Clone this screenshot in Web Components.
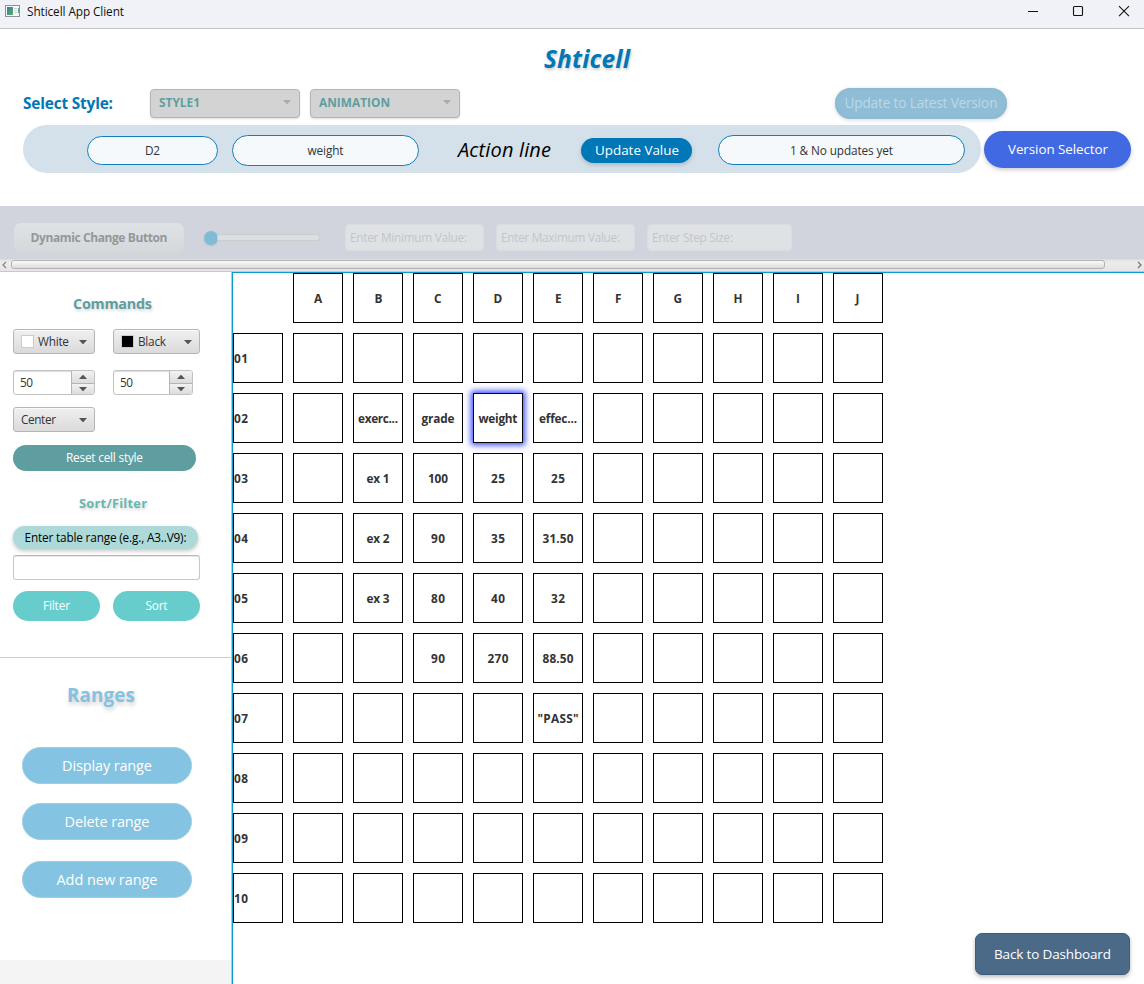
<!DOCTYPE html>
<html lang="en">
<head>
<meta charset="utf-8">
<title>Shticell App Client</title>
<style>
html,body{margin:0;height:100%;overflow:hidden;background:#fff}
body{font-family:"Open Sans","Noto Sans",sans-serif;font-size:11.8px;color:#333}
</style>
</head>
<body>
<shti-app></shti-app>
<script>
const define = (name, html, ready) => {
  const tpl = document.createElement('template');
  tpl.innerHTML = html;
  customElements.define(name, class extends HTMLElement {
    connectedCallback() {
      if (this.shadowRoot) return;
      this.attachShadow({mode: 'open'}).appendChild(tpl.content.cloneNode(true));
      if (ready) ready(this, this.shadowRoot);
    }
  });
};

/* A label whose tracking is tuned so that it takes exactly w pixels. */
define('fit-text', `<style>
:host{display:block;white-space:nowrap;line-height:var(--lh,18px);height:20px;flex:none;text-align:left}
span{display:inline-block}
</style><span><slot></slot></span>`, (el, root) => {
  const w = +el.getAttribute('w');
  if (!w) return;
  const s = root.querySelector('span');
  const n = el.textContent.length;
  el.style.width = w + 'px';
  s.style.letterSpacing = ((w - s.getBoundingClientRect().width) / Math.max(1, n - 1)) + 'px';
});

define('fx-button', `<style>
:host{display:flex;box-sizing:border-box;align-items:center;justify-content:center;flex:none;color:#fff}
</style><slot></slot>`);

define('fx-arrow', `<style>
:host{display:block;flex:none;width:8px;height:4px;color:#555}
:host([up]){transform:rotate(180deg)}
svg{display:block}
</style><svg width="8" height="4" viewBox="0 0 8 4"><path d="M0 0h8L4.4 4h-.8z" fill="currentColor"/></svg>`);

define('fx-combo', `<style>
:host{display:flex;box-sizing:border-box;align-items:center;justify-content:space-between;height:25px;flex:none;padding:0 7px 0 7px;
border:1px solid #b6b6b6;border-radius:3px;background:linear-gradient(#f0f0f0,#dadada);box-shadow:inset 0 1px #fafafa}
div{display:flex;align-items:center;gap:4px}
</style><div><slot></slot></div><fx-arrow></fx-arrow>`);

define('fx-spinner', `<style>
:host{display:flex;box-sizing:border-box;height:25px;flex:none;border:1px solid #c2c2c2;border-radius:3px;background:#fff;box-shadow:inset 0 1px 1px #ddd;overflow:hidden}
.v{flex:1;padding:2px 0 0 6px}
.b{width:22px;display:grid;grid-template-rows:12px 11px;border-left:1px solid #b5b5b5}
.b div{display:flex;align-items:center;justify-content:center;background:linear-gradient(#f2f2f2,#dcdcdc)}
.b div:first-child{padding-bottom:1px;box-sizing:border-box}
.b div+div{border-top:1px solid #b5b5b5;box-sizing:border-box}
</style><div class="v"><fit-text w="13">50</fit-text></div><div class="b"><div><fx-arrow up></fx-arrow></div><div><fx-arrow></fx-arrow></div></div>`);

define('title-bar', `<style>
:host{display:flex;box-sizing:border-box;height:29px;background:#f1f2f7;border-bottom:1px solid #c4c4c6;align-items:flex-start;color:#111;flex:none}
.i{margin:5px 0 0 5px}
fit-text{margin:2px 0 0 7px}
.w{margin:4px 13px 0 auto}
svg{display:block}
</style>
<svg class="i" width="15" height="12" viewBox="0 0 15 12"><defs><linearGradient id="g" x2="1" y2="1"><stop stop-color="#3a76ae"/><stop offset="1" stop-color="#58b368"/></linearGradient></defs><rect x=".5" y=".5" width="14" height="11" fill="#fafafa" stroke="#8d9296"/><rect x="2" y="2" width="6" height="8" fill="url(#g)"/><path d="M9 3.5h3M9 5.5h3M9 7.5h3" stroke="#cfd2d4"/><path d="M13.5 3v5" stroke="#5ba888"/></svg>
<fit-text w="97">Shticell App Client</fit-text>
<svg class="w" width="104" height="16" viewBox="0 0 104 16" fill="none" stroke="#111"><path d="M1 7.5h10"/><rect x="46.5" y="2.5" width="9" height="9" rx="1" stroke-width="1.1"/><path d="M92 2.2l10 10M102 2.2l-10 10" stroke-width="1.1"/></svg>`);

define('sheet-header', `<style>
:host{display:flex;flex-direction:column;height:177px;flex:none;background:#fff}
h1{margin:17px 0 0 544px;height:26px;font:italic bold 24.5px/26px "Open Sans","Noto Sans",sans-serif;color:#0077b6;text-shadow:1px 2px 3px rgba(0,0,0,.2)}
h1 fit-text{--lh:26px;height:26px}
.row{display:flex;align-items:center;height:32px;margin:15px 0 0 23px}
.sel{--lh:22px;color:#0077b6;font-size:15.4px;font-weight:bold;margin:0 37px 0 0}
fx-combo{--lh:20px;width:150px;height:29px;margin:0 10px 0 0;background:#d3d3d3;border-color:#b5b5b5;border-radius:4px;box-shadow:0 1px 2px #ddd;color:#5f9ea0;font-weight:bold;padding:0 8px 2px}
.latest{--lh:20px;margin:0 0 0 365px;width:172px;height:31px;border-radius:16px;background:#8fbdd6;color:#b9d9e8;font-size:13.6px;box-shadow:0 1px 4px #d8d8d8, inset 0 0 4px #86b9cd}
.line{display:flex;align-items:center;margin:6px 0 0 23px;gap:3px}
.bar{display:flex;box-sizing:border-box;width:958px;height:48px;border-radius:24px;background:#d4e0ea;align-items:center;padding:2px 0 0 64px}
.f{display:flex;box-sizing:border-box;align-items:center;justify-content:center;background:#f5f9fc;border:1px solid #1280bb;border-radius:16px;height:30px;color:#333;padding-top:1px}
.a{--lh:20px;color:#000;font-size:20px;font-style:italic;margin:0 30px 0 39px}
.u{--lh:20px;width:111px;height:25px;border-radius:13px;background:#0077b6;font-size:13.4px;box-shadow:0 2px 4px #aeb9c2;margin:0 26px 0 0;padding-left:1px}
.v{--lh:20px;width:147px;height:37px;border-radius:19px;background:#4169e1;font-size:13.4px;box-shadow:0 2px 4px #ccc;padding-left:1px}
</style>
<h1><fit-text w="86">Shticell</fit-text></h1>
<div class="row"><fit-text class="sel" w="90">Select Style:</fit-text>
<fx-combo><fit-text w="41">STYLE1</fit-text></fx-combo><fx-combo><fit-text w="71">ANIMATION</fit-text></fx-combo>
<fx-button class="latest"><fit-text w="153">Update to Latest Version</fit-text></fx-button></div>
<div class="line"><div class="bar"><div class="f" style="width:131px;height:29px;margin-top:1px"><fit-text w="15">D2</fit-text></div>
<div class="f" style="width:187px;height:31px;margin-left:14px"><fit-text w="36">weight</fit-text></div>
<fit-text class="a" w="93">Action line</fit-text><fx-button class="u"><fit-text w="84">Update Value</fit-text></fx-button>
<div class="f" style="width:247px"><fit-text w="103">1 &amp; No updates yet</fit-text></div></div>
<fx-button class="v"><fit-text w="100">Version Selector</fit-text></fx-button></div>`, (el, root) => {
  root.querySelectorAll('fx-combo').forEach(c => {
    c.shadowRoot.querySelector('fx-arrow').style.color = '#aaa';
  });
});

define('scroll-strip', `<style>
:host{display:flex;box-sizing:border-box;height:13px;align-items:center;background:linear-gradient(#dcdcdc,#ececec 25%,#e6e6e6);border-bottom:1px solid #c8c8c8;padding:0 2px 1px 2px}
.t{width:1094px;height:9px;box-sizing:border-box;border:1px solid #b2b2b2;border-radius:3px;background:linear-gradient(#fafafa,#ddd);margin:0 auto 0 4px}
svg{display:block;flex:none}
</style><svg width="5" height="8" viewBox="0 0 5 8"><path d="M4 1L1 4l3 3" fill="none" stroke="#888" stroke-width="1.3"/></svg><div class="t"></div><svg width="5" height="8" viewBox="0 0 5 8"><path d="M1 1l3 3-3 3" fill="none" stroke="#777" stroke-width="1.3"/></svg>`);

define('dynamic-bar', `<style>
:host{--lh:20px;display:flex;flex-direction:column;height:66px;flex:none;background:#d1d4dc}
.r{display:flex;height:53px;align-items:center;padding:9px 0 0 14px;box-sizing:border-box}
.d{width:170px;height:30px;border-radius:7px;background:linear-gradient(#dfe3e5,#d4d8da);color:#93979b;font-weight:bold;font-size:12px;margin-top:1px}
.s{display:flex;align-items:center;width:116px;margin:1px 25px 0 20px}
.k{width:14px;height:14px;border-radius:50%;background:#80bcd5;box-shadow:0 1px 2px #bbc}
.t{flex:1;height:5px;border-radius:0 3px 3px 0;border:1px solid #cbcecf;background:#dcdfe1;margin-left:-1px}
.f{display:flex;align-items:center;box-sizing:border-box;height:27px;width:139px;background:#dfe2e5;border:1px solid #d9dde0;border-radius:4px;color:#c2c5c8;padding-left:4px;margin-right:12px}
</style><div class="r"><fx-button class="d"><fit-text w="137">Dynamic Change Button</fit-text></fx-button>
<div class="s"><div class="k"></div><div class="t"></div></div>
<div class="f"><fit-text w="117">Enter Minimum Value:</fit-text></div><div class="f"><fit-text w="119">Enter Maximum Value:</fit-text></div><div class="f" style="width:145px"><fit-text w="81">Enter Step Size:</fit-text></div></div>
<scroll-strip></scroll-strip>`);

define('commands-panel', `<style>
:host{display:flex;flex-direction:column;box-sizing:border-box;height:386px;padding:22px 0 0 13px;background:#fff;border-bottom:1px solid #ccc;flex:none;align-items:flex-start}
.r{display:grid;grid-template-columns:100px auto;align-items:start}
.h{--lh:20px;color:#5f9ea0;font-size:14.4px;font-weight:bold;text-shadow:1px 2px 3px rgba(0,0,0,.17);margin-left:60px}
i{display:block;box-sizing:border-box;width:13px;height:13px;border:1px solid #ccc;background:#fff}
.k{background:#000}
.reset{width:183px;height:26px;border-radius:13px;background:#5f9ea0;margin-top:13px}
.tag{width:185px;height:23px;border-radius:12px;background:#addad9;color:#000;box-shadow:0 2px 4px #c5c5c5;margin-top:13px}
.in{box-sizing:border-box;width:187px;height:25px;border:1px solid #c8c8c8;border-top-color:#b5b5b5;border-radius:3px;margin-top:6px;box-shadow:inset 0 1px 1px #e8e8e8}
.b{width:87px;height:30px;border-radius:15px;background:#66cdcc}
</style>
<fit-text class="h" w="79">Commands</fit-text>
<div class="r" style="margin-top:15px"><fx-combo style="width:82px"><i></i><fit-text w="31">White</fit-text></fx-combo><fx-combo style="width:87px"><i class="k"></i><fit-text w="28">Black</fit-text></fx-combo></div>
<div class="r" style="margin-top:16px"><fx-spinner style="width:82px"></fx-spinner><fx-spinner style="width:80px"></fx-spinner></div>
<fx-combo style="width:82px;margin-top:12px"><fit-text w="35">Center</fit-text></fx-combo>
<fx-button class="reset"><fit-text w="77">Reset cell style</fit-text></fx-button>
<fit-text class="h" style="font-size:12.9px;color:#67b7b2;margin:22px 0 0 66px" w="68">Sort/Filter</fit-text>
<fx-button class="tag"><fit-text w="162">Enter table range (e.g., A3..V9):</fit-text></fx-button>
<div class="in"></div>
<div class="r" style="margin-top:11px"><fx-button class="b"><fit-text w="27">Filter</fit-text></fx-button><fx-button class="b"><fit-text w="22">Sort</fit-text></fx-button></div>`);

define('ranges-panel', `<style>
:host{--lh:20px;display:flex;flex-direction:column;box-sizing:border-box;height:302px;padding:27px 0 0 22px;align-items:flex-start;flex:none;background:#fff}
.h{color:#84c2e0;font-size:18.9px;font-weight:bold;text-shadow:1px 3px 4px rgba(0,0,0,.2);margin:0 0 42px 45px}
fx-button{width:170px;height:37px;border-radius:19px;background:#84c3e1;border:1px solid #9acfe5;font-size:14.5px;margin-bottom:19px}
</style>
<fit-text class="h" w="68">Ranges</fit-text>
<fx-button><fit-text w="90">Display range</fit-text></fx-button>
<fx-button style="margin-bottom:21px"><fit-text w="85">Delete range</fit-text></fx-button>
<fx-button><fit-text w="101">Add new range</fit-text></fx-button>`);

define('sheet-cell', `<style>
:host{display:flex;box-sizing:border-box;width:50px;height:50px;border:1px solid #000;background:#fff;align-items:center;justify-content:center;font-weight:bold;color:#333;padding-top:2px}
:host([row]){justify-content:flex-start}
:host([corner]){border-color:transparent}
:host([selected]){box-shadow:0 0 6px 2px #3448ff}
</style><slot></slot>`);

define('sheet-grid', `<style>
:host{display:grid;grid-template-columns:repeat(11,50px);grid-auto-rows:50px;gap:10px;align-content:start}
</style>`, (el, root) => {
  const widths = {A:8,B:7,C:8,D:9,E:6,F:6,G:9,H:9,I:4,J:5,'exerc...':40,grade:33,weight:39,'effec...':38,'ex 1':23,'ex 2':23,'ex 3':23,
    '100':20,'25':14,'90':14,'35':14,'31.50':31,'80':14,'40':14,'32':14,'270':21,'88.50':31,'"PASS"':41};
  const data = {
    2: {2:'exerc...',3:'grade',4:'weight',5:'effec...'},
    3: {2:'ex 1',3:'100',4:'25',5:'25'},
    4: {2:'ex 2',3:'90',4:'35',5:'31.50'},
    5: {2:'ex 3',3:'80',4:'40',5:'32'},
    6: {3:'90',4:'270',5:'88.50'},
    7: {5:'"PASS"'}
  };
  for (let r = 0; r <= 10; r++) for (let c = 0; c <= 10; c++) {
    const cell = document.createElement('sheet-cell');
    let text = '';
    if (!r && !c) cell.setAttribute('corner', '');
    else if (!r) text = 'ABCDEFGHIJ'[c - 1];
    else if (!c) { text = String(r).padStart(2, '0'); cell.setAttribute('row', ''); }
    else text = (data[r] || {})[c] || '';
    if (r === 2 && c === 4) cell.setAttribute('selected', '');
    if (text) {
      const t = document.createElement('fit-text');
      t.setAttribute('w', c ? widths[text] : 14);
      t.textContent = text;
      cell.append(t);
    }
    root.append(cell);
  }
});

define('shti-app', `<style>
:host{display:flex;flex-direction:column;width:1144px;height:984px;overflow:hidden;position:relative}
main{display:flex;flex:1;min-height:0}
aside{width:231px;background:#f4f4f4;border-right:1px solid #b9c9cf;flex:none}
section{flex:1;border:solid #0a9ccf;border-width:1px 0 0 1px}
.back{--lh:20px;position:absolute;right:14px;bottom:9px;width:155px;height:42px;border-radius:7px;background:#4a6a88;border:1px solid #3d5c76;font-size:13.5px;box-shadow:0 2px 4px #bbb}
</style>
<title-bar></title-bar><sheet-header></sheet-header><dynamic-bar></dynamic-bar>
<main><aside><commands-panel></commands-panel><ranges-panel></ranges-panel></aside>
<section><sheet-grid></sheet-grid></section></main>
<fx-button class="back"><fit-text w="117">Back to Dashboard</fit-text></fx-button>`);
</script>
</body>
</html>
